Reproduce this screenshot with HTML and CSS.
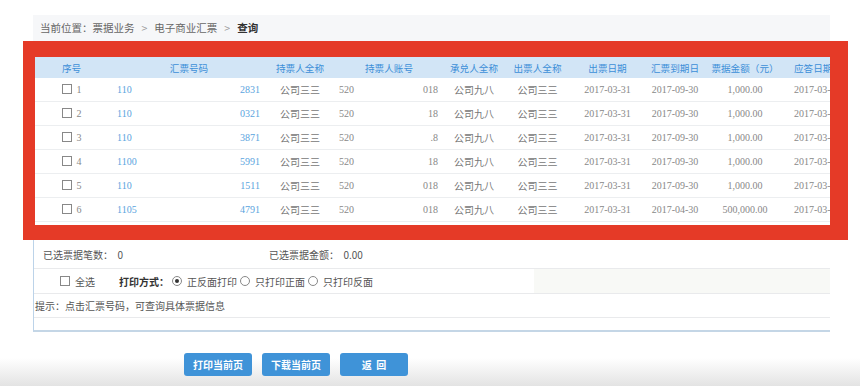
FILE: index.html
```html
<!DOCTYPE html>
<html lang="zh-CN">
<head>
    <meta charset="UTF-8">
    <title>电子商业汇票 查询</title>
    <link rel="stylesheet" href="styles.css">
</head>
<body>

    <div class="page">
        <div class="crumb">
            当前位置：票据业务<span class="sep">&gt;</span>电子商业汇票<span class="sep">&gt;</span><b>查询</b>
        </div>

        <div class="highlight">
            <div class="table-wrap">
                <table class="bills">
                    <colgroup>
                        <col style="width:73px"><col style="width:162px"><col style="width:60px">
                        <col style="width:118px"><col style="width:52px"><col style="width:75px">
                        <col style="width:65px"><col style="width:70px"><col style="width:70px">
                        <col style="width:60px">
                    </colgroup>
                    <thead>
                        <tr>
                            <th>序号</th><th>汇票号码</th><th>持票人全称</th><th>持票人账号</th>
                            <th>承兑人全称</th><th>出票人全称</th><th>出票日期</th><th>汇票到期日</th>
                            <th>票据金额（元）</th><th class="cut">应答日期</th>
                        </tr>
                    </thead>
                    <tbody id="rows"></tbody>
                </table>
            </div>
        </div>

        <div class="summary">
            <div class="srow first">
                <span class="count">已选票据笔数：&nbsp;&nbsp;0</span>
                <span>已选票据金额：&nbsp;&nbsp;0.00</span>
            </div>
            <div class="srow print">
                <div class="opts">
                    <span class="box"></span><span class="all">全选</span>
                    <b>打印方式：</b>
                    <span class="radio on"></span>正反面打印
                    <span class="radio"></span>只打印正面
                    <span class="radio"></span>只打印反面
                </div>
                <div class="shade"></div>
            </div>
            <div class="srow tip">提示：点击汇票号码，可查询具体票据信息</div>
            <div class="srow blank"></div>
        </div>

        <div class="actions">
            <button>打印当前页</button>
            <button>下载当前页</button>
            <button>返&nbsp;&nbsp;回</button>
        </div>
    </div>

    <script>
        const bills = [
            ['110', '2831', '018', '公司九八', '2017-09-30', '1,000.00'],
            ['110', '0321', '18', '公司九八', '2017-09-30', '1,000.00'],
            ['110', '3871', '.8', '公司九八', '2017-09-30', '1,000.00'],
            ['1100', '5991', '18', '公司九八', '2017-09-30', '1,000.00'],
            ['110', '1511', '018', '公司九八', '2017-09-30', '1,000.00'],
            ['1105', '4791', '018', '公司九八', '2017-04-30', '500,000.00']
        ];

        const tbody = document.getElementById('rows');
        bills.forEach((b, i) => {
            const tr = document.createElement('tr');
            tr.innerHTML =
                '<td><span class="box"></span><span class="num">' + (i + 1) + '</span></td>' +
                '<td><div class="split link"><span>' + b[0] + '</span><span>' + b[1] + '</span></div></td>' +
                '<td class="cn">公司三三</td>' +
                '<td><div class="split"><span>520</span><span>' + b[2] + '</span></div></td>' +
                '<td class="cn">' + b[3] + '</td>' +
                '<td class="cn">公司三三</td>' +
                '<td>2017-03-31</td>' +
                '<td>' + b[4] + '</td>' +
                '<td>' + b[5] + '</td>' +
                '<td class="cut">2017-03-</td>';
            tbody.appendChild(tr);
        });
    </script>

</body>
</html>
```

FILE: styles.css
```css
html, body {
    height: 386px;
}

body {
    margin: 0;
    overflow: hidden;
    background: linear-gradient(to bottom, #fff 0, #fff 358px, #e3e3e3 386px);
    font-family: "Noto Sans CJK SC", sans-serif;
    font-size: 10px;
    color: #555;
}

.page {
    width: 797px;
    padding: 15px 0 0 33px;
}

.crumb {
    height: 26px;
    line-height: 26px;
    padding-left: 7px;
    background-color: #f6f7f9;
    font-size: 10.5px;
    color: #666;
}

.crumb b {
    color: #333;
}

.sep {
    margin: 0 7px;
    color: #999;
}

.highlight {
    margin: 0 -18px 0 -10px;
    border-style: solid;
    border-color: #e53a27;
    border-width: 16px 18px 15px 12px;
    background-color: #fff;
}

.table-wrap {
    width: 795px;
    height: 168px;
    overflow: hidden;
}

.bills {
    width: 805px;
    table-layout: fixed;
    border-collapse: collapse;
}

.bills th {
    height: 21px;
    padding: 0;
    background-color: #d2e5f6;
    color: #3d8fd8;
    font-weight: normal;
    font-size: 9.6px;
    white-space: nowrap;
}

.bills td {
    height: 23px;
    padding: 0;
    border-bottom: 1px solid #eceef0;
    text-align: center;
    font-family: "Liberation Serif", "Noto Sans CJK SC", serif;
    font-size: 10px;
    color: #888;
    white-space: nowrap;
}

.bills td.cn {
    font-family: "Noto Sans CJK SC", sans-serif;
    color: #777;
}

.bills .cut {
    text-align: left;
    padding-left: 14px;
}

.num {
    margin-left: 5px;
}

.split {
    display: flex;
    justify-content: space-between;
    padding: 0 10px 0 9px;
}

.split.link {
    color: #5aa4de;
}

.box {
    display: inline-block;
    width: 8px;
    height: 8px;
    border: 1px solid #888;
    vertical-align: -1px;
    background-color: #fff;
}

.summary {
    border-left: 1px solid #bcd3e9;
    border-bottom: 2px solid #c4d6e6;
}

.srow {
    display: flex;
    align-items: center;
    border-bottom: 1px solid #e9eaec;
}

.srow.first {
    height: 28px;
    padding-left: 9px;
}

.count {
    width: 226px;
}

.srow.print {
    height: 24px;
}

.opts {
    width: 474px;
    display: flex;
    align-items: center;
    padding-left: 26px;
    white-space: nowrap;
}

.opts .all {
    margin: 0 24px 0 5px;
}

.opts b {
    color: #333;
}

.radio {
    display: inline-block;
    width: 8px;
    height: 8px;
    margin: 0 5px 0 3px;
    border: 1px solid #888;
    border-radius: 50%;
    position: relative;
}

.radio.on::after {
    content: "";
    position: absolute;
    top: 2px;
    left: 2px;
    width: 4px;
    height: 4px;
    border-radius: 50%;
    background-color: #333;
}

.shade {
    flex: 1;
    align-self: stretch;
    background-color: #f8f9f6;
}

.srow.tip {
    height: 23px;
    padding-left: 1px;
}

.srow.blank {
    height: 12px;
    border-bottom: none;
}

.actions {
    display: flex;
    gap: 10px;
    padding: 21px 0 0 151px;
}

.actions button {
    width: 68px;
    height: 23px;
    border: none;
    border-radius: 3px;
    background-color: #3f93d8;
    color: #fff;
    font-family: "Noto Sans CJK SC", sans-serif;
    font-size: 10px;
    font-weight: bold;
}
```
